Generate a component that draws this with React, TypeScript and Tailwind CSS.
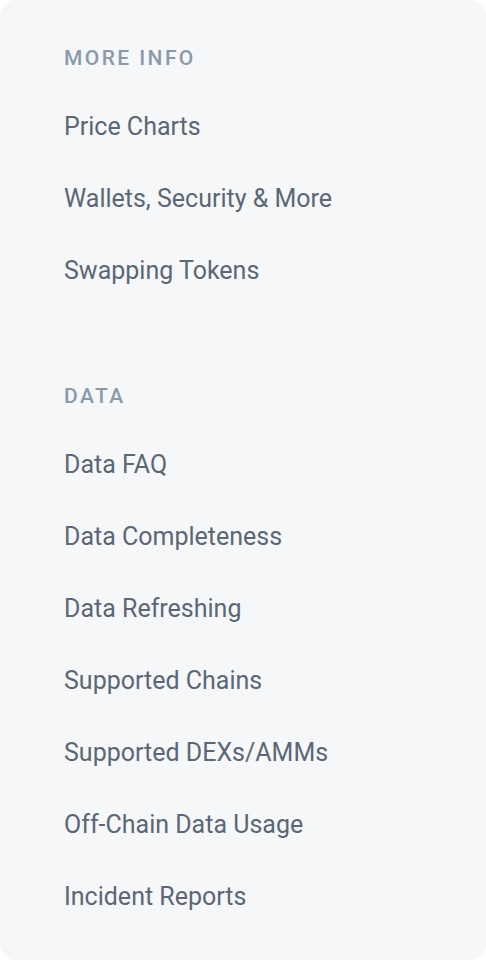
import React from "react";

const sections = [
  { title: "More Info", items: ["Price Charts", "Wallets, Security & More", "Swapping Tokens"] },
  {
    title: "Data",
    items: [
      "Data FAQ",
      "Data Completeness",
      "Data Refreshing",
      "Supported Chains",
      "Supported DEXs/AMMs",
      "Off-Chain Data Usage",
      "Incident Reports",
    ],
  },
];

export default function App() {
  return (
    <div className="w-[486px] h-[960px] bg-white" style={{ fontFamily: "Roboto, 'Noto Sans', sans-serif" }}>
      <div className="h-full w-full rounded-2xl bg-[#f5f7f9] pl-16 pt-[44px] flex flex-col gap-[75px]">
        {sections.map((s) => (
          <div key={s.title} className="flex flex-col">
            <div className="h-[30px] flex items-center text-[21px] font-medium uppercase tracking-[0.115em] text-[#8a9aa8] mb-[17px]">
              {s.title}
            </div>
            {s.items.map((it) => (
              <a key={it} className="h-[72px] flex items-center text-[25px] text-[#5b6775] cursor-pointer">
                {it}
              </a>
            ))}
          </div>
        ))}
      </div>
    </div>
  );
}
